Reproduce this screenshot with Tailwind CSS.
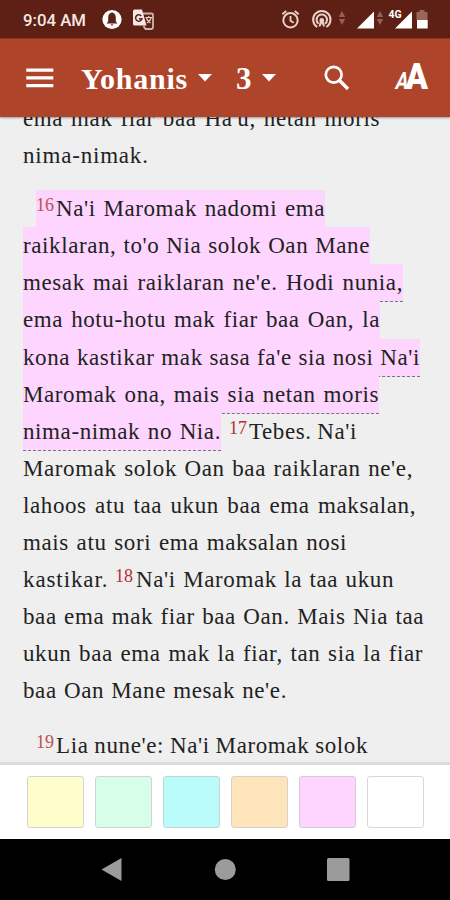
<!DOCTYPE html>
<html lang="tet">

<head>
    <meta charset="UTF-8">
    <meta name="viewport" content="width=device-width, initial-scale=1.0">
    <title>Yohanis 3</title>
    <script src="https://cdn.jsdelivr.net/npm/@tailwindcss/browser@4"></script>
</head>

<body class="bg-black">
    <div class="w-[450px] h-[900px] flex flex-col overflow-hidden bg-[#efefef]">

        <!-- status bar -->
        <div class="h-[38px] shrink-0 bg-[#5e1f14] flex">
            <div class="w-[102px] pl-[23px] pt-[8px] text-[16.8px] leading-[24px] font-medium text-[#f5e9e6] whitespace-nowrap font-['Roboto',sans-serif]">9:04 AM</div>
            <svg class="w-[348px] h-[38px]" viewBox="102 0 348 38" fill="none">
                <circle cx="112" cy="19.5" r="9.6" fill="#fff" />
                <path d="M112 12.500c-3 .6-3.800 3-3.800 5.500v3.500l-1.700 2h11l-1.700-2v-3.500c0-2.500-.8-4.900-3.800-5.500zM110.500 24.200h3l-1.500 1.500z" fill="#5e1f14" />
                <path d="M143 13.500h8.500a1.500 1.500 0 0 1 1.500 1.500v12.500a1.500 1.500 0 0 1-1.500 1.500h-6l-2-3" stroke="#cdb5af" stroke-width="1.800" />
                <path d="M134.500 9.500h7.500l4.500 16h-12a1.500 1.500 0 0 1-1.500-1.500v-13a1.500 1.500 0 0 1 1.500-1.500z" fill="#f5e9e6" />
                <path d="M141.300 16a3.200 3.200 0 1 0 .6 2.800h-3" stroke="#5e1f14" stroke-width="1.500" />
                <path d="M145.500 17.500h6.500M148.800 16v1.500M146.500 18c.6 2.500 2 4 4 5M151 18c-.6 2.500-2 4-4 5" stroke="#e8d9d5" stroke-width="1.200" />
                <!-- alarm -->
                <circle cx="290.500" cy="20.300" r="7.200" stroke="#ead2cb" stroke-width="2" />
                <path d="M290.500 16v4.800l3.200 2M282.300 14.300l4-3.300M298.700 14.300l-4-3.300" stroke="#ead2cb" stroke-width="1.800" />
                <!-- hotspot -->
                <path d="M317.200 27a8.700 8.700 0 1 1 9.200 0M318.600 23.800a5.200 5.200 0 1 1 6.400 0" stroke="#ead2cb" stroke-width="2" />
                <path d="M321.800 18a2.400 2.400 0 0 1 2 3.700l1.200 4.800h-1.800l-1.400-3-1.400 3h-1.800l1.200-4.800a2.400 2.400 0 0 1 2-3.700z" fill="#ead2cb" />
                <path d="M342 11l3.200 6h-6.400zM342 25l-3.200-6h6.400zM380 11l3.200 6h-6.400zM380 25l-3.200-6h6.400z" fill="#8e6258" />
                <path d="M374 11.500v17h-17zM412 11.500v17h-17z" fill="#fff" />
                <path d="M419.500 10h5v2h3v8h-11v-8h3z" fill="#97675b" />
                <path d="M417 20h10.700v8.500h-10.700z" fill="#fff" />
                <rect x="388" y="8.500" width="14.500" height="9.500" fill="#5e1f14" />
                <text x="388.500" y="17.500" fill="#fff" font-family="Roboto" font-size="10.500" font-weight="700">4G</text>
            </svg>
        </div>

        <!-- toolbar -->
        <div class="h-[79px] shrink-0 bg-[#ae452a] border-t border-[#92371f] text-white flex items-center relative z-10 shadow-[0_1px_2px_rgba(0,0,0,0.35)] font-['Liberation_Serif',serif] font-bold">
            <svg class="ml-[26px] w-[28px] h-[20px]" viewBox="0 0 28 20" fill="#fff">
                <path d="M.3 .5h27v3.200h-27zM.3 8.300h27v3.200h-27zM.3 16h27v3.200h-27z" />
            </svg>
            <span class="ml-[27px] w-[107px] text-[30px] leading-[36px] tracking-[0.75px] whitespace-nowrap pt-[2px]">Yohanis</span>
            <svg class="ml-[10px] w-[14px] h-[8px]" viewBox="0 0 14 8" fill="#fff">
                <path d="M0 0h14l-7 7.500z" />
            </svg>
            <span class="ml-[24px] w-[17px] text-[31px] leading-[36px] pt-[2px]">3</span>
            <svg class="ml-[9px] w-[14px] h-[8px]" viewBox="0 0 14 8" fill="#fff">
                <path d="M0 0h14l-7 7.500z" />
            </svg>
            <svg class="ml-[48px] w-[26px] h-[26px]" viewBox="0 0 26 26" fill="none" stroke="#fff">
                <circle cx="9.700" cy="9.700" r="7.900" stroke-width="2.700" />
                <path d="M15.300 15.300l8.700 8.700" stroke-width="3.400" />
            </svg>
            <svg class="ml-[44px] w-[36px] h-[30px] overflow-visible" viewBox="0 0 36 30" fill="#fff">
                <text font-family="Roboto" font-size="24" font-weight="700" transform="translate(.5 26) skewX(-12) scale(.78 1)">A</text>
                <text x="11.500" y="26" font-family="Roboto" font-size="36" font-weight="900" textLength="22.500" lengthAdjust="spacingAndGlyphs">A</text>
            </svg>
        </div>

        <!-- chapter text, one row per line -->
        <div class="h-[645px] shrink-0 overflow-hidden font-['Liberation_Serif',serif] text-[23px] leading-[38px] tracking-[0.6px] [word-spacing:-1.5px] text-[#222] whitespace-nowrap">
            <div class="-mt-[17px] pl-[23px]">
                <div class="h-[37.1px]"><div class="w-[357px] [text-align-last:justify] whitespace-normal">ema mak fiar baa Ha'u, netan moris</div></div>
                <div class="h-[37.1px]"><div class="w-[125px] tracking-[0.8px]">nima-nimak.</div></div>
            </div>

            <div class="mt-[16px] pl-[23px]">
                <div class="h-[37.1px] flex pl-[13px]">
                    <div class="h-[38px] flex bg-[#fdd5ff]">
                        <span class="w-[20px] text-[18px] leading-[31px] tracking-normal text-[#c0504d]">16</span>
                        <span class="w-[269px] [text-align-last:justify] whitespace-normal">Na'i Maromak nadomi ema</span>
                    </div>
                </div>
                <div class="h-[37.1px]"><div class="w-[347px] h-[38px] bg-[#fdd5ff] [text-align-last:justify] whitespace-normal">raiklaran, to'o Nia solok Oan Mane</div></div>
                <div class="h-[37.1px]"><div class="w-[380px] h-[38px] bg-[#fdd5ff] border-b border-dashed border-[#777] [text-align-last:justify] whitespace-normal">mesak mai raiklaran ne'e. Hodi nunia,</div></div>
                <div class="h-[37.1px]"><div class="w-[357px] h-[38px] bg-[#fdd5ff] [text-align-last:justify] whitespace-normal">ema hotu-hotu mak fiar baa Oan, la</div></div>
                <div class="h-[37.1px]"><div class="w-[397px] h-[38px] bg-[#fdd5ff] border-b border-dashed border-[#777] [text-align-last:justify] whitespace-normal">kona kastikar mak sasa fa'e sia nosi Na'i</div></div>
                <div class="h-[37.1px]"><div class="w-[356px] h-[38px] bg-[#fdd5ff] border-b border-dashed border-[#777] [text-align-last:justify] whitespace-normal">Maromak ona, mais sia netan moris</div></div>
                <div class="h-[37.1px] flex">
                    <div class="w-[198px] h-[38px] bg-[#fdd5ff] border-b border-dashed border-[#777] [text-align-last:justify] whitespace-normal">nima-nimak no Nia.</div>
                    <span class="ml-[8px] w-[20px] text-[18px] leading-[31px] tracking-normal text-[#b5302c]">17</span>
                    <span class="w-[108px] [text-align-last:justify] whitespace-normal">Tebes. Na'i</span>
                </div>
                <div class="h-[37.1px]"><div class="w-[390px] [text-align-last:justify] whitespace-normal">Maromak solok Oan baa raiklaran ne'e,</div></div>
                <div class="h-[37.1px]"><div class="w-[393px] [text-align-last:justify] whitespace-normal">lahoos atu taa ukun baa ema maksalan,</div></div>
                <div class="h-[37.1px]"><div class="w-[324px] [text-align-last:justify] whitespace-normal">mais atu sori ema maksalan nosi</div></div>
                <div class="h-[37.1px] flex">
                    <span class="w-[92px] tracking-[0.9px]">kastikar.</span>
                    <span class="w-[21px] text-[18px] leading-[31px] tracking-normal text-[#b5302c]">18</span>
                    <span class="w-[258px] [text-align-last:justify] whitespace-normal">Na'i Maromak la taa ukun</span>
                </div>
                <div class="h-[37.1px]"><div class="w-[401px] [text-align-last:justify] whitespace-normal">baa ema mak fiar baa Oan. Mais Nia taa</div></div>
                <div class="h-[37.1px]"><div class="w-[400px] [text-align-last:justify] whitespace-normal">ukun baa ema mak la fiar, tan sia la fiar</div></div>
                <div class="h-[37.1px]"><div class="w-[264px] [text-align-last:justify] whitespace-normal">baa Oan Mane mesak ne'e.</div></div>
            </div>

            <div class="mt-[17px] pl-[36px] flex">
                <span class="w-[20px] text-[18px] leading-[31px] tracking-normal text-[#c0504d]">19</span>
                <span class="w-[312px] [text-align-last:justify] whitespace-normal">Lia nune'e: Na'i Maromak solok</span>
            </div>
        </div>

        <!-- highlight colours -->
        <div class="h-[77px] shrink-0 bg-white border-t-[3px] border-[#dcdcdc] pl-[27px] pt-[11px] flex gap-[11px]">
            <div class="w-[57px] h-[52px] rounded-[3px] border border-[#d5d5d0] bg-[#fffdcb]"></div>
            <div class="w-[57px] h-[52px] rounded-[3px] border border-[#d0d5d2] bg-[#d6fee9]"></div>
            <div class="w-[57px] h-[52px] rounded-[3px] border border-[#c5d5d5] bg-[#b9fbf9]"></div>
            <div class="w-[57px] h-[52px] rounded-[3px] border border-[#d8d2c8] bg-[#fee4bb]"></div>
            <div class="w-[57px] h-[52px] rounded-[3px] border border-[#d6cbd6] bg-[#fdd5ff]"></div>
            <div class="w-[57px] h-[52px] rounded-[3px] border border-[#d8d8d8] bg-white"></div>
        </div>

        <!-- navigation bar -->
        <div class="h-[61px] shrink-0 bg-black">
            <svg class="w-[450px] h-[61px]" viewBox="0 839 450 61" fill="#9b9b9b">
                <path d="M121.500 858v23l-20-11.500z" />
                <circle cx="225.300" cy="869.500" r="10.500" />
                <rect x="327" y="858" width="22.500" height="23" rx="1.500" />
            </svg>
        </div>
    </div>
</body>

</html>
